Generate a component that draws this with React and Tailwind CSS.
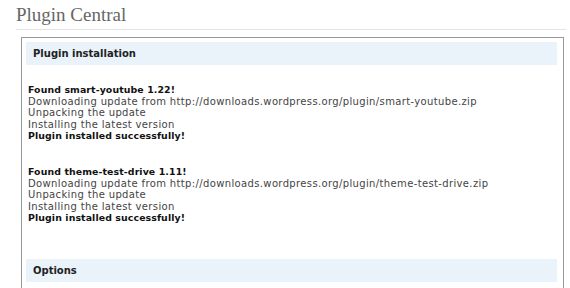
const results = [
  {
    name: "smart-youtube",
    version: "1.22",
  },
  {
    name: "theme-test-drive",
    version: "1.11",
  },
];

const SectionHeading = ({ children }) => (
  <div className="h-[23px] bg-[#eaf2fa] mr-[2px] pl-[7px] flex items-center text-[10px] font-semibold text-[#222]">
    {children}
  </div>
);

const InstallResult = ({ plugin }) => (
  <div className="text-[10px] leading-[11.6px] text-[#444] tracking-[0.36px]">
    <p className="font-bold text-[#111] text-[9.4px] tracking-[0.1px]">
      Found {plugin.name} {plugin.version}!
    </p>
    <p>Downloading update from http://downloads.wordpress.org/plugin/{plugin.name}.zip</p>
    <p>Unpacking the update</p>
    <p>Installing the latest version</p>
    <p className="font-bold text-[#111] text-[9.4px] tracking-[0.1px]">Plugin installed successfully!</p>
  </div>
);

export default function App() {
  return (
    <div className="w-[570px] h-[288px] overflow-hidden bg-white font-['DejaVu_Sans',sans-serif]">
      <div className="pl-[16px] pr-[4px] pt-[3px]">
        <h1 className="font-['Liberation_Serif',serif] text-[19px] leading-[23px] text-[#666] pb-[3px] border-b border-[#e3e3e3]">
          Plugin Central
        </h1>
      </div>

      <div className="ml-[21px] mr-[6px] mt-[7px] border border-[#999] px-[4px] pt-[4px] h-[300px]">
        <SectionHeading>Plugin installation</SectionHeading>

        <div className="pl-[2px] pt-[19px] flex flex-col gap-[24px]">
          {results.map((plugin) => (
            <InstallResult key={plugin.name} plugin={plugin} />
          ))}
        </div>

        <div className="mt-[35px]">
          <SectionHeading>Options</SectionHeading>
        </div>
      </div>
    </div>
  );
}
